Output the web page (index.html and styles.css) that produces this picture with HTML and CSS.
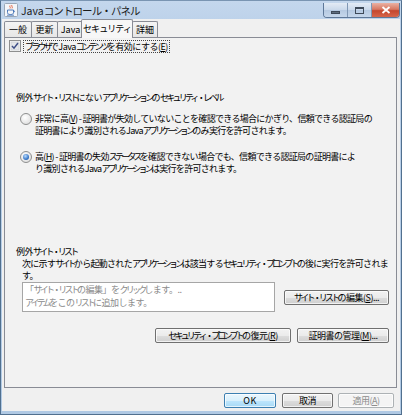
FILE: index.html
```html
<!DOCTYPE html>
<html lang="ja">
<head>
  <meta charset="UTF-8">
  <title>Javaコントロール・パネル</title>
  <link rel="stylesheet" href="styles.css">
</head>
<body>
<div class="window">
  <!-- タイトルバー -->
  <div class="titlebar">
    <svg class="app-icon" viewBox="0 0 14 14">
      <rect x="0.5" y="0.5" width="13" height="13" rx="1" fill="#f4f6f9" stroke="#9aa7b7"/>
      <path d="M6 2.5c-1 1 1 1.6 0 3M8 2c-1.2 1.2 1.2 1.8 0 3.4" fill="none" stroke="#e0542c" stroke-width="0.9"/>
      <path d="M3.5 7h6v2.6c0 1.2-1 1.9-3 1.9s-3-.7-3-1.9z" fill="none" stroke="#3d6eb3" stroke-width="0.9"/>
      <path d="M9.5 7.6c1.4 0 1.4 1.6 0 1.6" fill="none" stroke="#3d6eb3" stroke-width="0.8"/>
      <path d="M3 12.2h7" stroke="#3d6eb3" stroke-width="0.8"/>
    </svg>
    <span class="title">Java<span class="kana">コントロール・パネル</span></span>
    <div class="caption-buttons">
      <div class="cap cap-min"><span class="min-glyph"></span></div>
      <div class="cap cap-max"><span class="max-glyph"></span></div>
      <div class="cap cap-close">
        <svg viewBox="0 0 10 8" width="10" height="8"><path d="M1.5 1l7 6M8.5 1l-7 6" stroke="#fff" stroke-width="1.8"/></svg>
      </div>
    </div>
  </div>

  <div class="client">
    <!-- タブ -->
    <div class="tabs">
      <div class="tab tab-general">一般</div>
      <div class="tab tab-update">更新</div>
      <div class="tab tab-java">Java</div>
      <div class="tab tab-security selected"><span class="kana">セキュリティ</span></div>
      <div class="tab tab-advanced">詳細</div>
    </div>

    <div class="panel">
      <div class="check-row">
        <svg class="checkbox" viewBox="0 0 12 12">
          <rect x="0.5" y="0.5" width="11" height="11" fill="#f6f6f6" stroke="#8e8f8f"/>
          <rect x="2" y="2" width="8" height="8" fill="#e4e6ea" stroke="#c4c8ce" stroke-width="0.6"/>
          <path d="M3 6l2 2.2L9 3" fill="none" stroke="#3e4f87" stroke-width="1.5"/>
        </svg>
        <span class="focus-label"><span class="kana">ブラウザ</span>でJava<span class="kana">コンテンツ</span>を有効にする(<u>E</u>)</span>
      </div>

      <div class="section-title level-title">例外<span class="kana">サイト・リスト</span>にない<span class="kana">アプリケーション</span>の<span class="kana">セキュリティ・レベル</span></div>

      <div class="radio-row radio-first">
        <span class="radio"></span>
        <div class="radio-text">非常に高(<u>V</u>) - 証明書が失効していないことを確認できる場合にかぎり、信頼できる認証局の<br>証明書により識別されるJava<span class="kana">アプリケーション</span>のみ実行を許可されます。</div>
      </div>

      <div class="radio-row radio-second">
        <span class="radio checked"></span>
        <div class="radio-text">高(<u>H</u>) - 証明書の失効<span class="kana">ステータス</span>を確認できない場合でも、信頼できる認証局の証明書によ<br>り識別されるJava<span class="kana">アプリケーション</span>は実行を許可されます。</div>
      </div>

      <div class="section-title exception-title">例外<span class="kana">サイト・リスト</span></div>
      <div class="desc">次に示す<span class="kana">サイト</span>から起動された<span class="kana">アプリケーション</span>は該当する<span class="kana">セキュリティ・プロンプト</span>の後に実行を許可されま<br>す。</div>

      <div class="list-row">
        <div class="listbox">「<span class="kana">サイト・リスト</span>の編集」を<span class="kana">クリック</span>します。..<br><span class="kana">アイテム</span>をこの<span class="kana">リスト</span>に追加します。</div>
        <button class="btn btn-sites"><span class="kana">サイト・リスト</span>の編集(<u>S</u>)...</button>
      </div>

      <div class="button-row">
        <button class="btn btn-restore"><span class="kana">セキュリティ・プロンプト</span>の復元(<u>R</u>)</button>
        <button class="btn btn-certs">証明書の管理(<u>M</u>)...</button>
      </div>
    </div>

    <!-- 下部ボタン -->
    <div class="footer">
      <button class="btn btn-ok default">OK</button>
      <button class="btn btn-cancel">取消</button>
      <button class="btn btn-apply" disabled>適用(<u>A</u>)</button>
    </div>
  </div>
</div>
</body>
</html>
```

FILE: styles.css
```css
* {
  margin: 0;
  padding: 0;
  box-sizing: border-box;
}
body {
  width: 402px;
  height: 415px;
  overflow: hidden;
  font-family: "Noto Sans CJK JP", "Noto Sans", sans-serif;
  font-size: 9px;
  letter-spacing: -0.5px;
  color: #000;
}
u {
  text-decoration: underline;
  text-underline-offset: 1px;
}
/* カタカナは詰めて表示 */
.kana {
  letter-spacing: -0.31em;
}

/* ウィンドウ枠 */
.window {
  height: 415px;
  display: flex;
  flex-direction: column;
  background: linear-gradient(#c4d7ed, #bdd2ea 20px, #b0c9e4);
  border: 1px solid #51708f;
  border-top-color: #7a95b2;
}
.titlebar {
  height: 18px;
  display: flex;
  align-items: center;
  padding-left: 3px;
}
.app-icon {
  width: 14px;
  height: 14px;
  margin-right: 3px;
}
.title {
  font-size: 10.5px;
  letter-spacing: 0;
  color: #1b1b1b;
}
.title .kana {
  letter-spacing: -0.9px;
}
.caption-buttons {
  margin-left: auto;
  margin-right: 1px;
  align-self: flex-start;
  margin-top: 2px;
  display: flex;
  border: 1px solid #5e7898;
  border-top: none;
  border-radius: 0 0 4px 4px;
  overflow: hidden;
}
.cap {
  height: 14px;
  display: flex;
  align-items: center;
  justify-content: center;
}
.cap-min,
.cap-max {
  width: 24px;
  background: linear-gradient(#e3ebf5, #c9d8ea 50%, #b5c9e1 51%, #c6d7eb);
  border-right: 1px solid #7f97b4;
}
.min-glyph {
  width: 9px;
  height: 3px;
  margin-top: 5px;
  background: #5f6e80;
  border: 1px solid #3e4a59;
}
.max-glyph {
  width: 9px;
  height: 7px;
  border: 1px solid #3e4a59;
  border-top-width: 2px;
}
.cap-close {
  width: 27px;
  background: linear-gradient(#eab1a3, #d77862 45%, #c4472f 55%, #d6654a);
}

/* クライアント領域 */
.client {
  flex: 1;
  margin: 0 1px 3px;
  background: #f0f0f0;
  display: flex;
  flex-direction: column;
}
.tabs {
  height: 18px;
  display: flex;
  padding-left: 2px;
  align-items: flex-end;
}
.tab {
  height: 16px;
  line-height: 15px;
  text-align: center;
  white-space: nowrap;
  letter-spacing: 0;
  border: 1px solid #898c95;
  border-bottom: none;
  border-radius: 2px 2px 0 0;
  margin-right: -1px;
  background: linear-gradient(#f4f4f4, #e6e6e6);
}
.tab-general { width: 28px; }
.tab-update { width: 27px; }
.tab-java { width: 27px; }
.tab-advanced { width: 26px; }
.tab.selected {
  width: 52px;
  height: 19px;
  line-height: 17px;
  margin: 0 -2px -1px -2px;
  background: #f7f7f7;
  position: relative;
  z-index: 1;
}
.tab.selected .kana {
  letter-spacing: -0.1em;
}
.tab-security + .tab-advanced {
  margin-left: 1px;
}

.panel {
  flex: 1;
  margin: 0 3px 0 2px;
  border: 1px solid #898c95;
  background: #f2f2f2;
  display: flex;
  flex-direction: column;
  padding: 0 7px 0 0;
}
.check-row {
  display: flex;
  align-items: center;
  height: 12px;
  margin: 2px 0 0 4px;
}
.checkbox {
  width: 12px;
  height: 12px;
  margin-right: 2px;
}
.focus-label {
  line-height: 11px;
  padding: 0 1px;
  border: 1px dotted #444;
}
.section-title {
  line-height: 12px;
  margin-left: 11px;
  white-space: nowrap;
}
.level-title {
  margin-top: 40px;
}
.radio-row {
  display: flex;
  align-items: flex-start;
  margin-left: 15px;
}
.radio-first {
  margin-top: 9px;
}
.radio-second {
  margin-top: 14px;
}
.radio {
  width: 12px;
  height: 12px;
  flex: none;
  margin-right: 3px;
  border-radius: 50%;
  border: 1px solid #8e8f8f;
  background: radial-gradient(circle at 40% 35%, #ffffff, #e3e3e3 70%, #d0d0d0);
  position: relative;
}
.radio.checked::after {
  content: "";
  position: absolute;
  left: 2px;
  top: 2px;
  width: 6px;
  height: 6px;
  border-radius: 50%;
  background: radial-gradient(circle at 40% 35%, #b9dcff, #3a78c8 60%, #1b4f95);
}
.radio-text {
  line-height: 12px;
  letter-spacing: -0.7px;
  white-space: nowrap;
}
.radio-text .kana {
  letter-spacing: -0.31em;
}
.exception-title {
  margin-top: 71px;
}
.desc {
  margin: 0 0 0 17px;
  line-height: 12px;
  letter-spacing: -0.7px;
  white-space: nowrap;
}
.desc .kana {
  letter-spacing: -0.31em;
}
.list-row {
  display: flex;
  align-items: flex-start;
  margin-left: 17px;
  gap: 8px;
}
.listbox {
  width: 253px;
  height: 30px;
  background: #fff;
  border: 1px solid #a6a6a6;
  color: #8a8a8a;
  line-height: 13px;
  padding: 0 0 0 2px;
  white-space: nowrap;
}
.btn {
  height: 15px;
  padding: 0;
  font-family: inherit;
  font-size: 9px;
  letter-spacing: -0.5px;
  color: #000;
  border: 1px solid #707070;
  border-radius: 2px;
  background: linear-gradient(#f2f2f2, #ebebeb 50%, #dddddd 51%, #cfcfcf);
  box-shadow: inset 0 0 0 1px rgba(255, 255, 255, 0.7);
  line-height: 12px;
  white-space: nowrap;
}
.btn-sites {
  width: 105px;
  margin-top: 8px;
  margin-left: auto;
}
.button-row {
  display: flex;
  justify-content: flex-end;
  gap: 6px;
  margin-top: 16px;
}
.btn-restore { width: 136px; }
.btn-certs { width: 92px; }

.footer {
  height: 23px;
  display: flex;
  justify-content: flex-end;
  align-items: flex-start;
  padding: 5px 6px 0 0;
  gap: 6px;
}
.btn-ok {
  width: 52px;
  letter-spacing: 0.5px;
  border-color: #3c7fb1;
  background: linear-gradient(#eaf6fd, #d9f0fc 50%, #bee6fd 51%, #a7d9f5);
}
.btn-cancel { width: 51px; }
.btn-apply {
  width: 56px;
  margin-left: -1px;
  color: #8d8d8d;
  border-color: #adb2b5;
  background: #f4f4f4;
}
```
